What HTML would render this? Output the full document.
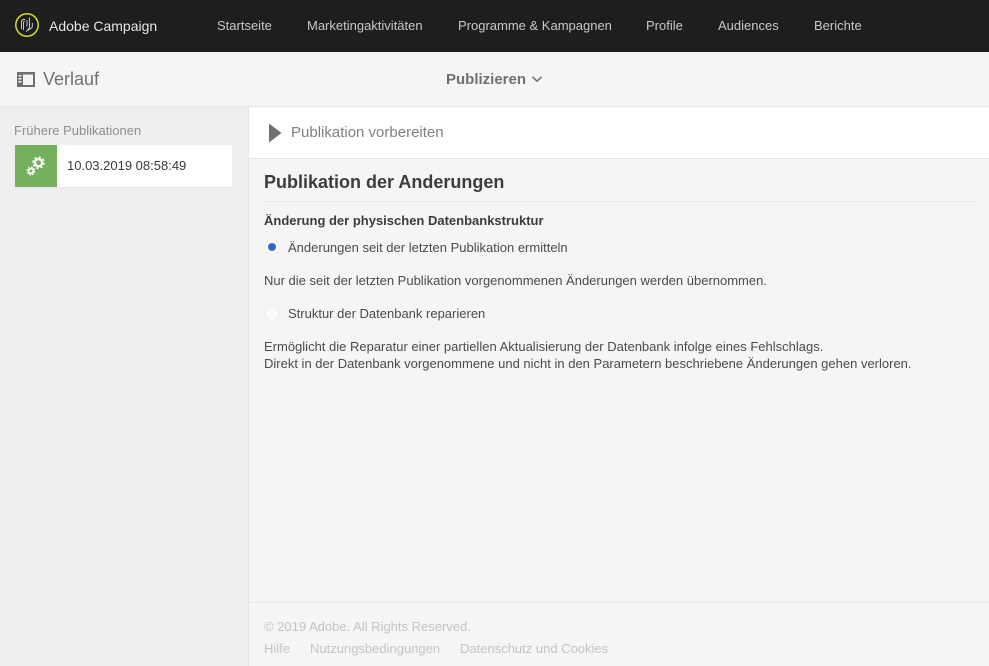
<!DOCTYPE html>
<html lang="de">
<head>
<meta charset="utf-8">
<title>Adobe Campaign</title>
<style>
*{box-sizing:border-box}
html,body{margin:0;padding:0}
body{width:989px;height:666px;position:relative;overflow:hidden;background:#f5f5f5;font-family:"Liberation Sans",Arial,sans-serif;font-size:13px;color:#4b4b4b}
.a{position:absolute;white-space:nowrap}
#top{left:0;top:0;width:989px;height:52px;background:#1e1e1e}
.nav{top:18px;line-height:16px;font-size:13px;color:#c8c8c8}
#side{left:0;top:107px;width:249px;height:559px;background:#efefef;border-right:1px solid #e6e6e6}
#head2{left:0;top:106px;width:989px;height:1px;background:#e6e6e6}
#prep{left:249px;top:107px;width:740px;height:52px;background:#fff;border-bottom:1px solid #e6e6e6}
.t{font-size:13px;line-height:16px;color:#4b4b4b}
.f{font-size:13px;line-height:15px;color:#c4c4c4}
</style>
</head>
<body>
<div class="a" id="top"></div>
<svg class="a" style="left:14px;top:12px" width="26" height="26" viewBox="0 0 26 26" fill="none">
<circle cx="13" cy="13" r="11.200" stroke="#d4e01c" stroke-width="1.500"/>
<path d="M7.500 17V10c0-1.500 1-2.500 2.500-2.500h1M9.500 18V10.500c0-.8.500-1.300 1.300-1.300M15.500 5.500V15c0 1.300-1 2-2 2.400M13 8v6.500M12 19.500l5.500-3.500c.6-.5.800-1 .8-1.800V11" stroke="#d8d8d8" stroke-width=".9"/>
</svg>
<div class="a" style="left:49px;top:17px;font-size:14px;line-height:18px;color:#e6e6e6">Adobe Campaign</div>
<div class="a nav" style="left:217px">Startseite</div>
<div class="a nav" style="left:307px">Marketingaktivitäten</div>
<div class="a nav" style="left:458px">Programme &amp; Kampagnen</div>
<div class="a nav" style="left:646px">Profile</div>
<div class="a nav" style="left:718px">Audiences</div>
<div class="a nav" style="left:814px">Berichte</div>

<svg class="a" style="left:17px;top:71px" width="18" height="16" viewBox="0 0 18 16">
<path fill-rule="evenodd" fill="#707070" d="M0 1h18v15H0zM6 3.500V14h10V3.500zM1.500 4v1.500h3V4zM1.500 7v1.500h3V7zM1.500 10v1.500h3V10z"/>
</svg>
<div class="a" style="left:43px;top:68px;font-size:18px;line-height:22px;color:#707070">Verlauf</div>
<div class="a" style="left:446px;top:72px;font-size:15px;line-height:16px;font-weight:bold;color:#707070">Publizieren</div>
<svg class="a" style="left:531px;top:75px" width="12" height="8" viewBox="0 0 12 8" fill="none"><path d="M1.500 1.800L6 6.200l4.500-4.400" stroke="#707070" stroke-width="1.500"/></svg>
<div class="a" id="head2"></div>

<div class="a" id="side"></div>
<div class="a" style="left:14px;top:123px;font-size:13px;line-height:15px;color:#8e8e8e">Frühere Publikationen</div>
<div class="a" style="left:15px;top:145px;width:217px;height:42px;background:#fff;border-radius:0 2px 2px 0;box-shadow:0 1px 1px #e4e4e4"></div>
<div class="a" style="left:15px;top:145px;width:42px;height:42px;background:#75b05c"></div>
<svg class="a" style="left:26px;top:155px" width="21" height="22" viewBox="0 0 21 22">
<g fill="none" stroke="#fff">
<circle cx="12.500" cy="7.700" r="3.600" stroke-width="2.200"/>
<circle cx="12.500" cy="7.700" r="5.400" stroke-width="1.800" stroke-dasharray="2.120 2.120"/>
<circle cx="5" cy="16" r="2.300" stroke-width="1.600"/>
<circle cx="5" cy="16" r="3.700" stroke-width="1.500" stroke-dasharray="1.600 1.300"/>
</g>
</svg>
<div class="a" style="left:67px;top:158px;font-size:13px;line-height:15px;color:#3a3a3a">10.03.2019 08:58:49</div>

<div class="a" id="prep"></div>
<svg class="a" style="left:268px;top:123px" width="14" height="20" viewBox="0 0 14 20"><path fill="#707070" d="M1 .5L13.500 10 1 19.500z"/></svg>
<div class="a" style="left:291px;top:124px;font-size:15px;line-height:18px;color:#808080">Publikation vorbereiten</div>

<div class="a" style="left:264px;top:172px;font-size:18px;line-height:20px;font-weight:bold;color:#3c3c3c">Publikation der Anderungen</div>
<div class="a" style="left:264px;top:201px;width:710px;height:1px;background:#e8e8e8"></div>
<div class="a" style="left:264px;top:213px;font-size:13px;line-height:16px;font-weight:bold;color:#3c3c3c">Änderung der physischen Datenbankstruktur</div>

<div class="a" style="left:264px;top:239px;width:16px;height:16px;border-radius:50%;background:#fff;border:1px solid #ececec"></div>
<div class="a" style="left:268px;top:243px;width:8px;height:8px;border-radius:50%;background:#3468c8"></div>
<div class="a t" style="left:288px;top:240px">Änderungen seit der letzten Publikation ermitteln</div>
<div class="a t" style="left:264px;top:273px">Nur die seit der letzten Publikation vorgenommenen Änderungen werden übernommen.</div>
<div class="a" style="left:264px;top:305px;width:16px;height:16px;border-radius:50%;background:#f9f9f9;border:1px solid #ececec"></div>
<div class="a t" style="left:288px;top:306px">Struktur der Datenbank reparieren</div>
<div class="a t" style="left:264px;top:339px">Ermöglicht die Reparatur einer partiellen Aktualisierung der Datenbank infolge eines Fehlschlags.</div>
<div class="a t" style="left:264px;top:356px">Direkt in der Datenbank vorgenommene und nicht in den Parametern beschriebene Änderungen gehen verloren.</div>

<div class="a" style="left:249px;top:602px;width:740px;height:1px;background:#e8e8e8"></div>
<div class="a f" style="left:264px;top:619px">© 2019 Adobe. All Rights Reserved.</div>
<div class="a f" style="left:264px;top:641px">Hilfe</div>
<div class="a f" style="left:310px;top:641px">Nutzungsbedingungen</div>
<div class="a f" style="left:460px;top:641px">Datenschutz und Cookies</div>
</body>
</html>
